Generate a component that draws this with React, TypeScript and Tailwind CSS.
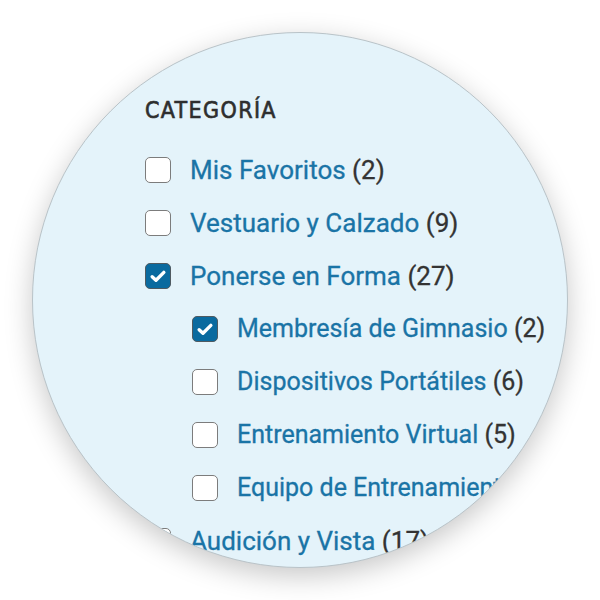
import React from 'react';

type Item = { label: string; count: number; checked?: boolean; nested?: boolean };

const items: Item[] = [
  { label: 'Mis Favoritos', count: 2 },
  { label: 'Vestuario y Calzado', count: 9 },
  { label: 'Ponerse en Forma', count: 27, checked: true },
  { label: 'Membresía de Gimnasio', count: 2, checked: true, nested: true },
  { label: 'Dispositivos Portátiles', count: 6, nested: true },
  { label: 'Entrenamiento Virtual', count: 5, nested: true },
  { label: 'Equipo de Entrenamiento', count: 11, nested: true },
  { label: 'Audición y Vista', count: 17 },
];

const Checkbox: React.FC<{ checked?: boolean }> = ({ checked }) => (
  <span
    className={
      checked
        ? 'w-[26px] h-[26px] shrink-0 rounded-[5px] border-[1.5px] border-[#4f5a61] bg-[#0a6a9f] flex items-center justify-center'
        : 'w-[26px] h-[26px] shrink-0 rounded-[5px] border-[1.5px] border-[#7c7c7c] bg-white'
    }
  >
    {checked && (
      <svg className="w-[18px] h-[18px]" viewBox="0 0 16 16" fill="none">
        <path d="M2.8 8.6l3.4 3.2L13.2 4.8" stroke="white" strokeWidth="3" strokeLinecap="round" strokeLinejoin="round" />
      </svg>
    )}
  </span>
);

const App: React.FC = () => {
  return (
    <div className="w-[600px] h-[600px] bg-white flex items-center justify-center">
      <div className="w-[536px] h-[536px] rounded-full overflow-hidden bg-[#e4f3fa] border border-[#b9c3c8] shadow-[0_8px_28px_rgba(0,0,0,0.22)]">
        <div className="pl-[112px] pt-[66px] w-[700px]">
          <h2
            className="text-[23px] leading-none text-[#2e2e2e] tracking-[0.06em] [-webkit-text-stroke:0.6px_#2e2e2e]"
            style={{ fontFamily: '"DejaVu Sans Condensed", "DejaVu Sans", sans-serif' }}
          >
            CATEGORÍA
          </h2>
          <ul className="mt-[21px] flex flex-col" style={{ fontFamily: 'Roboto, "Liberation Sans", sans-serif' }}>
            {items.map((it) => (
              <li
                key={it.label}
                className={it.nested ? 'h-[53px] flex items-center gap-[19px] pl-[47px]' : 'h-[53px] flex items-center gap-[19px]'}
              >
                <Checkbox checked={it.checked} />
                <span
                  className={
                    it.nested
                      ? 'text-[25px] leading-none whitespace-nowrap [-webkit-text-stroke:0.3px_currentColor]'
                      : 'text-[26px] leading-none whitespace-nowrap [-webkit-text-stroke:0.3px_currentColor]'
                  }
                >
                  <span className="text-[#1a74a6]">{it.label}</span>{' '}
                  <span className="text-[#333333]">({it.count})</span>
                </span>
              </li>
            ))}
          </ul>
        </div>
      </div>
    </div>
  );
};

export default App;
